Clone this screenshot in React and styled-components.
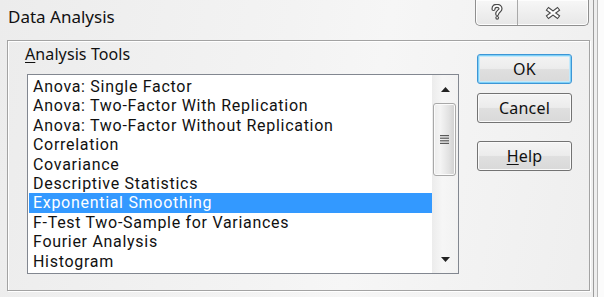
import React from "react";
import styled, { createGlobalStyle } from "styled-components";

const Global = createGlobalStyle`
  html, body { margin: 0; padding: 0; background: #f0f0f0; }
  body { font-family: "Noto Sans", "Open Sans", sans-serif; }
`;

const Window = styled.div`
  width: 604px;
  height: 297px;
  display: flex;
  overflow: hidden;
  background: linear-gradient(100deg, #ececec 0%, #f3f3f3 45%, #f6f6f6 60%, #eeeeee 100%);
`;

const Client = styled.div`
  width: 593px;
  border-right: 1px solid #9c9c9c;
  display: flex;
  flex-direction: column;
`;

const FrameEdge = styled.div`
  flex: 1;
  background: linear-gradient(to right, #eeeeee 0 3px, #b5b5b5 3px 4px, #fbfbfb 4px);
`;

const TitleBar = styled.div`
  height: 40px;
  display: flex;
  justify-content: space-between;
  align-items: flex-start;
`;

const Title = styled.div`
  padding: 6px 0 0 8px;
  font-size: 17px;
  line-height: 22px;
  color: #111;
`;

const Caption = styled.div`
  display: flex;
  margin-right: 4px;
  height: 25px;
  border: 1px solid #8f8f8f;
  border-top: none;
  border-radius: 0 0 5px 5px;
  background: linear-gradient(#f7f7f7, #e7e7e7);
  box-shadow: inset 0 0 0 1px #fdfdfd;
  overflow: hidden;
`;

const CapBtn = styled.div`
  width: ${(p) => p.$w}px;
  display: flex;
  align-items: center;
  justify-content: center;
  & + & { border-left: 1px solid #a9a9a9; }
`;

const Group = styled.div`
  margin-left: 7px;
  height: 246px;
  border: 1px solid #a3a3a3;
  box-shadow: inset 1px 1px 0 #ffffff, 1px 1px 0 #ffffff;
  display: flex;
  padding: 3px 0 0 17px;
  box-sizing: content-box;
  width: 564px;
`;

const LeftCol = styled.div`
  display: flex;
  flex-direction: column;
`;

const Label = styled.div`
  font-size: 16px;
  letter-spacing: 0.1px;
  line-height: 20px;
  color: #111;
  margin-bottom: 10px;
  u { text-decoration-thickness: 1px; text-underline-offset: 2px; }
`;

const ListBox = styled.div`
  margin-left: 2px;
  width: 432px;
  height: 200px;
  box-sizing: border-box;
  border: 1px solid #828790;
  background: #fff;
  display: flex;
`;

const Items = styled.div`
  flex: 1;
  padding: 2px 0 0 1px;
`;

const Item = styled.div`
  height: 19.4px;
  line-height: 19.4px;
  padding-left: 4px;
  font-family: Roboto, "Noto Sans", sans-serif;
  font-size: 16px;
  letter-spacing: 0.7px;
  color: ${(p) => (p.$sel ? "#ffffff" : "#111")};
  background: ${(p) => (p.$sel ? "#3399ff" : "transparent")};
  white-space: nowrap;
`;

const ScrollBar = styled.div`
  width: 26px;
  display: flex;
  flex-direction: column;
  background: linear-gradient(to right, #ececec, #f6f6f6 40%, #f2f2f2);
`;

const ScrollBtn = styled.div`
  height: 28px;
  display: flex;
  align-items: center;
  justify-content: center;
`;

const Thumb = styled.div`
  margin-left: 1px;
  width: 23px;
  height: 73px;
  box-sizing: border-box;
  border: 1px solid #a8a8a8;
  border-radius: 3px;
  background: linear-gradient(to right, #ececec, #f4f4f4 30%, #e2e2e2 70%, #cfcfcf);
  box-shadow: inset 0 0 0 1px #fbfbfb;
  display: flex;
  align-items: center;
  justify-content: center;
`;

const Track = styled.div`
  flex: 1;
`;

const ButtonCol = styled.div`
  margin: 10px 0 0 18px;
  display: flex;
  flex-direction: column;
`;

const Button = styled.div`
  width: 95px;
  height: 30px;
  box-sizing: border-box;
  margin-top: ${(p) => p.$mt || 0}px;
  border: 1px solid ${(p) => (p.$def ? "#3d96d6" : "#737373")};
  border-radius: 3px;
  background: linear-gradient(#f4f4f4 0%, #ececec 48%, #dfdfdf 52%, #d9d9d9 100%);
  box-shadow: ${(p) =>
    p.$def ? "inset 0 0 0 1px #7fd0f6, inset 0 0 0 2px #c4e9fb" : "inset 0 0 0 1px #fafafa"};
  display: flex;
  align-items: center;
  justify-content: center;
  font-size: 16px;
  letter-spacing: 0.2px;
  color: #111;
  u { text-decoration-thickness: 1px; text-underline-offset: 2px; }
`;

const items = [
  "Anova: Single Factor",
  "Anova: Two-Factor With Replication",
  "Anova: Two-Factor Without Replication",
  "Correlation",
  "Covariance",
  "Descriptive Statistics",
  "Exponential Smoothing",
  "F-Test Two-Sample for Variances",
  "Fourier Analysis",
  "Histogram",
];

const HelpGlyph = () => (
  <svg width="14" height="17" viewBox="0 0 14 17">
    <g fill="none" strokeLinecap="round">
      <path d="M3.5 5 C3.5 2.6 5 1.8 7 1.8 C9 1.8 10.5 3 10.5 4.8 C10.5 7 7.2 7.2 7.2 10" stroke="#4b4b4b" strokeWidth="4.2" />
      <circle cx="7.2" cy="13.8" r="1.9" fill="#4b4b4b" />
      <path d="M3.5 5 C3.5 2.6 5 1.8 7 1.8 C9 1.8 10.5 3 10.5 4.8 C10.5 7 7.2 7.2 7.2 10" stroke="#ffffff" strokeWidth="1.8" />
      <circle cx="7.2" cy="13.8" r="0.8" fill="#ffffff" />
    </g>
  </svg>
);

const CloseGlyph = () => (
  <svg width="18" height="14" viewBox="0 0 18 14">
    <g strokeLinecap="butt">
      <path d="M3 2.5 L15 11.5 M15 2.5 L3 11.5" stroke="#4b4b4b" strokeWidth="4.6" />
      <path d="M3.8 3.1 L14.2 10.9 M14.2 3.1 L3.8 10.9" stroke="#ffffff" strokeWidth="2.2" />
    </g>
  </svg>
);

const Up = () => (
  <svg width="9" height="5" viewBox="0 0 9 5"><path d="M0 5 L4.5 0 L9 5 Z" fill="#222" /></svg>
);
const Down = () => (
  <svg width="9" height="5" viewBox="0 0 9 5"><path d="M0 0 L4.5 5 L9 0 Z" fill="#222" /></svg>
);
const Grip = () => (
  <svg width="9" height="9" viewBox="0 0 9 9">
    {[0, 2.6, 5.2, 7.8].map((y) => (
      <rect key={y} x="0" y={y} width="9" height="1.2" fill="#5a5a5a" />
    ))}
  </svg>
);

export default function App() {
  return (
    <>
      <Global />
      <Window>
        <Client>
          <TitleBar>
            <Title>Data Analysis</Title>
            <Caption>
              <CapBtn $w={41}><HelpGlyph /></CapBtn>
              <CapBtn $w={70}><CloseGlyph /></CapBtn>
            </Caption>
          </TitleBar>
          <Group>
            <LeftCol>
              <Label><u>A</u>nalysis Tools</Label>
              <ListBox>
                <Items>
                  {items.map((t, i) => (
                    <Item key={t} $sel={i === 6}>{t}</Item>
                  ))}
                </Items>
                <ScrollBar>
                  <ScrollBtn><Up /></ScrollBtn>
                  <Thumb><Grip /></Thumb>
                  <Track />
                  <ScrollBtn><Down /></ScrollBtn>
                </ScrollBar>
              </ListBox>
            </LeftCol>
            <ButtonCol>
              <Button $def>OK</Button>
              <Button $mt={9}>Cancel</Button>
              <Button $mt={18}><u>H</u>elp</Button>
            </ButtonCol>
          </Group>
        </Client>
        <FrameEdge />
      </Window>
    </>
  );
}
